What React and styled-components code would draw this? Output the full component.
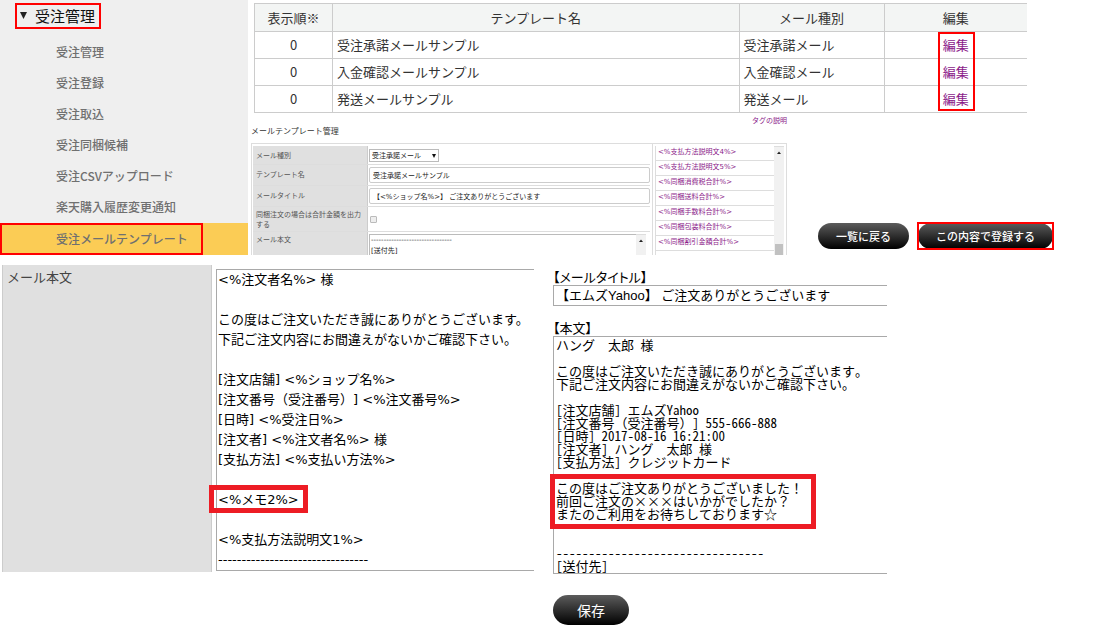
import React, { Component } from "react";
import styled, { createGlobalStyle, ThemeProvider } from "styled-components";

const theme = {
  colors: {
    mark: "#ff0000",
    markDeep: "#ed1c24",
    visited: "#8b1a89",
    sidebar: "#efefef",
    active: "#fbcc55",
    label: "#e0e0e0",
    line: "#cccccc",
    lineLight: "#dddddd",
    field: "#a9a9a9"
  },
  fonts: {
    ui: '"Noto Sans CJK JP", sans-serif',
    wide: '"DejaVu Sans", "Noto Sans CJK JP", sans-serif',
    arial: '"Liberation Sans", "Noto Sans CJK JP", sans-serif',
    gothic:
      '"Noto Sans Mono CJK JP", "Liberation Sans", "Noto Sans CJK JP", monospace'
  }
};

const GlobalStyle = createGlobalStyle`
  * {
    box-sizing: border-box;
  }
  body {
    margin: 0;
    background: #fff;
    color: #333;
    font-family: ${theme.fonts.ui};
  }
`;

const Top = styled.div`
  display: flex;
  height: 255px;
  overflow: hidden;
`;

const Sidebar = styled.nav`
  flex: 0 0 248px;
  padding-top: 3px;
  background: ${props => props.theme.colors.sidebar};
`;
const SidebarTitle = styled.button`
  display: flex;
  align-items: center;
  gap: 8px;
  height: 26px;
  margin: 0 0 8px 15px;
  padding: 0 4px 2px 3px;
  border: 2px solid ${props => props.theme.colors.mark};
  background: none;
  color: #111;
  font: 15px ${props => props.theme.fonts.ui};
`;
const SidebarList = styled.ul`
  margin: 0;
  padding: 0;
  list-style: none;
`;
const SidebarItem = styled.li`
  display: flex;
  height: ${props => (props.$active ? "32px" : "31px")};
  background: ${props =>
    props.$active ? props.theme.colors.active : "transparent"};
`;
const SidebarLink = styled.a`
  display: flex;
  align-items: center;
  width: 203px;
  padding: 0 0 2px 54px;
  border: 2px solid
    ${props => (props.$active ? props.theme.colors.mark : "transparent")};
  color: #707070;
  font-size: 12px;
  font-weight: 500;
  text-decoration: none;
  white-space: nowrap;
`;

const Content = styled.main`
  flex: 1;
  min-width: 0;
  padding-top: 3px;
`;
const TableWrap = styled.div`
  margin: 0 92px 0 6px;
`;
const Table = styled.table`
  width: 100%;
  table-layout: fixed;
  border-collapse: collapse;
  border: 1px solid ${props => props.theme.colors.line};
  border-right: 0;
  font-size: 13px;
  line-height: 20px;
`;
const Th = styled.th`
  width: ${props => props.$width || "auto"};
  height: 28px;
  padding: 0;
  border: 1px solid ${props => props.theme.colors.line};
  border-right: 0;
  background: #f3f5f4;
  font-weight: 400;
`;
const Td = styled.td`
  height: 27px;
  padding: 0 4px;
  border: 1px solid ${props => props.theme.colors.line};
  border-right: 0;
  text-align: ${props => props.$align || "left"};
`;
const EditCell = styled(Td)`
  position: relative;
`;
const EditLink = styled.a`
  color: ${props => props.theme.colors.visited};
  text-decoration: none;
`;
const EditMark = styled.span`
  position: absolute;
  top: 0;
  left: 50%;
  width: 37px;
  height: 79px;
  margin-left: -18px;
  border: 2px solid ${props => props.theme.colors.mark};
  pointer-events: none;
`;

const Lower = styled.div`
  display: flex;
  align-items: flex-start;
  padding-left: 3px;
`;
const TemplatePanel = styled.section`
  flex: 0 0 536px;
  font-size: 7px;
  line-height: 10px;
`;
const TagHelp = styled.div`
  display: flex;
  justify-content: flex-end;
  height: 10px;
  margin-top: 2px;
`;
const PanelTitle = styled.h2`
  margin: 0 0 6px;
  font-size: 8px;
  font-weight: 400;
  line-height: 12px;
`;
const PanelBody = styled.div`
  display: grid;
  grid-template-columns: 400px 1fr;
  height: 120px;
  border: 1px solid ${props => props.theme.colors.lineLight};
`;
const FormRows = styled.div`
  padding: 2px 2px 0 1px;
`;
const FormRow = styled.div`
  display: grid;
  grid-template-columns: 115px 1fr;
  height: ${props => props.$height};
  border-bottom: 1px solid ${props => props.theme.colors.lineLight};
`;
const FormLabel = styled.label`
  padding: ${props => (props.$tight ? "2px" : "4px")} 0 0 3px;
  border-right: 1px solid ${props => props.theme.colors.line};
  background: ${props => props.theme.colors.label};
  color: #555;
`;
const FormField = styled.div`
  display: flex;
  align-items: ${props => props.$align || "center"};
  padding-left: 1px;
`;
const SmallSelect = styled.select`
  height: 13px;
  width: 70px;
  padding: 0 2px;
  border: 1px solid #bbb;
  background: #fff;
  appearance: none;
  color: #222;
  font: 7px ${props => props.theme.fonts.arial};
`;
const SelectWrap = styled.span`
  position: relative;
  display: flex;
`;
const SelectArrow = styled.svg`
  position: absolute;
  right: 3px;
  top: 5px;
  pointer-events: none;
`;
const SmallInput = styled.input`
  width: 100%;
  height: 16px;
  padding: 0 3px;
  border: 1px solid #ccc;
  border-radius: 2px;
  color: #222;
  font: 7px ${props => props.theme.fonts.wide};
`;
const SmallCheck = styled.input`
  width: 7px;
  height: 7px;
  margin: 0 1px;
  appearance: none;
  border: 1px solid #bbb;
  border-radius: 1px;
  background: #eee;
`;
const SmallBody = styled.textarea`
  flex: 1;
  height: 40px;
  margin-top: 2px;
  padding: 0 1px;
  border: 1px solid #bbb;
  border-right: 0;
  resize: none;
  overflow: hidden;
  color: #222;
  font: 7px/11px ${props => props.theme.fonts.wide};
`;
const TagPane = styled.div`
  display: flex;
  padding: 2px 2px 0;
  border-left: 1px solid ${props => props.theme.colors.lineLight};
`;
const TagList = styled.ul`
  flex: 1;
  margin: 0;
  padding: 0;
  border-left: 1px solid ${props => props.theme.colors.lineLight};
  list-style: none;
`;
const TagItem = styled.li`
  height: 15px;
  padding-left: 2px;
  border-bottom: 1px solid ${props => props.theme.colors.lineLight};
  font-family: ${props => props.theme.fonts.wide};
  line-height: 13px;
`;
const Scroll = styled.div`
  display: flex;
  flex-direction: column;
  align-items: center;
  align-self: stretch;
  width: 10px;
  margin-top: ${props => props.$top || "0"};
  margin-right: ${props => props.$right || "0"};
  padding-top: 4px;
  border-top: 1px solid ${props => props.theme.colors.lineLight};
  background: #f1f1f1;
`;
const Thumb = styled.div`
  width: 8px;
  height: 30px;
  margin-top: 89px;
  background: #c1c1c1;
`;
const Actions = styled.div`
  display: flex;
  gap: 9px;
  margin: 110px 0 0 31px;
`;
const PillButton = styled.button`
  height: ${props => (props.$large ? "30px" : "26px")};
  padding: 0 ${props => (props.$large ? "24px" : "18px")};
  border: 0;
  border-radius: 15px;
  background: linear-gradient(#5c5c5c, #000);
  color: #fff;
  font: ${props => (props.$large ? "400 14px" : "500 11px")}
    ${props => props.theme.fonts.ui};
  white-space: nowrap;
`;
const ActionMark = styled.span`
  display: flex;
  outline: 2px solid ${props => props.theme.colors.mark};
  outline-offset: -1px;
`;

const Bottom = styled.div`
  display: flex;
  align-items: flex-start;
  padding: 10px 0 0 2px;
`;
const BodyEditor = styled.section`
  display: flex;
  flex: 0 0 532px;
  height: 307px;
`;
const BodyLabel = styled.label`
  width: 210px;
  padding: 2px 4px;
  border: 1px solid ${props => props.theme.colors.line};
  border-width: 0 1px;
  background: ${props => props.theme.colors.label};
  color: #444;
  font-size: 13px;
  line-height: 20px;
`;
const TextWrap = styled.div`
  position: relative;
  display: flex;
  flex: 1;
  padding: ${props => props.$padding || "0"};
`;
const BodyText = styled.textarea`
  flex: 1;
  min-width: 0;
  margin: 0;
  padding: ${props => (props.$dense ? "1px 2px" : "0 1px")};
  border: 1px solid ${props => props.theme.colors.field};
  border-right: 0;
  border-radius: 0;
  resize: none;
  overflow: hidden;
  color: #000;
  white-space: pre;
  text-spacing-trim: space-all;
  font: 13px/${props => (props.$dense ? "13px" : "20px")}
    ${props => (props.$dense ? props.theme.fonts.gothic : props.theme.fonts.wide)};
`;
const Mark = styled.span`
  position: absolute;
  top: ${props => props.$top};
  left: ${props => props.$left};
  width: ${props => props.$width};
  height: ${props => props.$height};
  border: 5px solid ${props => props.theme.colors.markDeep};
  pointer-events: none;
`;

const Preview = styled.section`
  display: flex;
  flex-direction: column;
  align-items: flex-start;
  flex: 0 0 343px;
  margin-left: 10px;
  padding: 2px 0 0 9px;
`;
const PreviewLabel = styled.label`
  color: #000;
  font-size: 13px;
  font-feature-settings: "palt";
  line-height: 20px;
`;
const TitleInput = styled.input`
  width: 100%;
  height: 21px;
  margin: -2px 0 12px;
  padding: 0 2px 2px;
  border: 1px solid ${props => props.theme.colors.field};
  border-right: 0;
  color: #000;
  font: 13px ${props => props.theme.fonts.arial};
`;
const PreviewBody = styled.div`
  display: flex;
  width: 100%;
  height: 238px;
  margin: -2px 0 21px;
`;

const menu = [
  "受注管理",
  "受注登録",
  "受注取込",
  "受注同梱候補",
  "受注CSVアップロード",
  "楽天購入履歴変更通知",
  "受注メールテンプレート"
];

const templates = [
  { name: "受注承諾メールサンプル", type: "受注承諾メール" },
  { name: "入金確認メールサンプル", type: "入金確認メール" },
  { name: "発送メールサンプル", type: "発送メール" }
];

const tags = [
  "<%支払方法説明文4%>",
  "<%支払方法説明文5%>",
  "<%同梱消費税合計%>",
  "<%同梱送料合計%>",
  "<%同梱手数料合計%>",
  "<%同梱包装料合計%>",
  "<%同梱割引金額合計%>"
];

const templateBody = `<%注文者名%> 様

この度はご注文いただき誠にありがとうございます。
下記ご注文内容にお間違えがないかご確認下さい。

[注文店舗] <%ショップ名%>
[注文番号（受注番号）] <%注文番号%>
[日時] <%受注日%>
[注文者] <%注文者名%> 様
[支払方法] <%支払い方法%>

<%メモ2%>

<%支払方法説明文1%>
--------------------------------`;

const previewBody = `ハング　太郎 様

この度はご注文いただき誠にありがとうございます。
下記ご注文内容にお間違えがないかご確認下さい。

[注文店舗] エムズYahoo
[注文番号（受注番号）] 555-666-888
[日時] 2017-08-16 16:21:00
[注文者] ハング　太郎 様
[支払方法] クレジットカード

この度はご注文ありがとうございました！
前回ご注文の×××はいかがでしたか？
またのご利用をお待ちしております☆


--------------------------------
[送付先]`;

const Triangle = ({ size, up }) => (
  <svg width={size} height={size} viewBox="0 0 8 8">
    <path d={up ? "M0 6 L4 1 L8 6 Z" : "M0 0 H8 L4 8 Z"} fill="#222" />
  </svg>
);

class App extends Component {
  renderTemplates() {
    return (
      <TableWrap>
        <Table>
          <thead>
            <tr>
              <Th $width="78px">表示順※</Th>
              <Th>テンプレート名</Th>
              <Th $width="145px">メール種別</Th>
              <Th $width="143px">編集</Th>
            </tr>
          </thead>
          <tbody>
            {templates.map((template, i) => (
              <tr key={template.name}>
                <Td $align="center">0</Td>
                <Td>{template.name}</Td>
                <Td>{template.type}</Td>
                <EditCell $align="center">
                  <EditLink href="#edit">編集</EditLink>
                  {i === 0 && <EditMark />}
                </EditCell>
              </tr>
            ))}
          </tbody>
        </Table>
      </TableWrap>
    );
  }

  renderTemplateForm() {
    return (
      <TemplatePanel>
        <TagHelp>
          <EditLink href="#tags">タグの説明</EditLink>
        </TagHelp>
        <PanelTitle>メールテンプレート管理</PanelTitle>
        <PanelBody>
          <FormRows>
            <FormRow $height="19px">
              <FormLabel htmlFor="type">メール種別</FormLabel>
              <FormField>
                <SelectWrap>
                  <SmallSelect id="type">
                    <option>受注承諾メール</option>
                  </SmallSelect>
                  <SelectArrow width="4" height="4" viewBox="0 0 8 8">
                    <path d="M0 0 H8 L4 8 Z" fill="#111" />
                  </SelectArrow>
                </SelectWrap>
              </FormField>
            </FormRow>
            <FormRow $height="21px">
              <FormLabel htmlFor="name">テンプレート名</FormLabel>
              <FormField>
                <SmallInput id="name" defaultValue="受注承諾メールサンプル" />
              </FormField>
            </FormRow>
            <FormRow $height="21px">
              <FormLabel htmlFor="title">メールタイトル</FormLabel>
              <FormField>
                <SmallInput
                  id="title"
                  defaultValue="【<%ショップ名%>】 ご注文ありがとうございます"
                />
              </FormField>
            </FormRow>
            <FormRow $height="25px">
              <FormLabel htmlFor="total" $tight>
                同梱注文の場合は合計金額を出力する
              </FormLabel>
              <FormField>
                <SmallCheck id="total" type="checkbox" />
              </FormField>
            </FormRow>
            <FormRow $height="40px">
              <FormLabel htmlFor="small-body" $tight>
                メール本文
              </FormLabel>
              <FormField $align="flex-start">
                <SmallBody
                  id="small-body"
                  defaultValue={"--------------------------------\n[送付先]"}
                />
                <Scroll $top="2px" $right="4px">
                  <Triangle size="4" up />
                </Scroll>
              </FormField>
            </FormRow>
          </FormRows>
          <TagPane>
            <TagList>
              {tags.map(tag => (
                <TagItem key={tag}>
                  <EditLink href="#tag">{tag}</EditLink>
                </TagItem>
              ))}
            </TagList>
            <Scroll>
              <Triangle size="4" up />
              <Thumb />
            </Scroll>
          </TagPane>
        </PanelBody>
      </TemplatePanel>
    );
  }

  render() {
    return (
      <ThemeProvider theme={theme}>
        <GlobalStyle />
        <Top>
          <Sidebar>
            <SidebarTitle>
              <Triangle size="7" />
              受注管理
            </SidebarTitle>
            <SidebarList>
              {menu.map((item, i) => (
                <SidebarItem key={item} $active={i === menu.length - 1}>
                  <SidebarLink href="#menu" $active={i === menu.length - 1}>
                    {item}
                  </SidebarLink>
                </SidebarItem>
              ))}
            </SidebarList>
          </Sidebar>
          <Content>
            {this.renderTemplates()}
            <Lower>
              {this.renderTemplateForm()}
              <Actions>
                <PillButton>一覧に戻る</PillButton>
                <ActionMark>
                  <PillButton>この内容で登録する</PillButton>
                </ActionMark>
              </Actions>
            </Lower>
          </Content>
        </Top>
        <Bottom>
          <BodyEditor>
            <BodyLabel htmlFor="template-body">メール本文</BodyLabel>
            <TextWrap $padding="4px 0 1px 4px">
              <BodyText id="template-body" defaultValue={templateBody} />
              <Mark $top="220px" $left="-3px" $width="99px" $height="28px" />
            </TextWrap>
          </BodyEditor>
          <Preview>
            <PreviewLabel htmlFor="preview-title">【メールタイトル】</PreviewLabel>
            <TitleInput
              id="preview-title"
              defaultValue="【エムズYahoo】 ご注文ありがとうございます"
            />
            <PreviewLabel htmlFor="preview-body">【本文】</PreviewLabel>
            <PreviewBody>
              <TextWrap>
                <BodyText id="preview-body" $dense defaultValue={previewBody} />
                <Mark $top="138px" $left="-3px" $width="266px" $height="55px" />
              </TextWrap>
            </PreviewBody>
            <PillButton $large>保存</PillButton>
          </Preview>
        </Bottom>
      </ThemeProvider>
    );
  }
}

export default App;
